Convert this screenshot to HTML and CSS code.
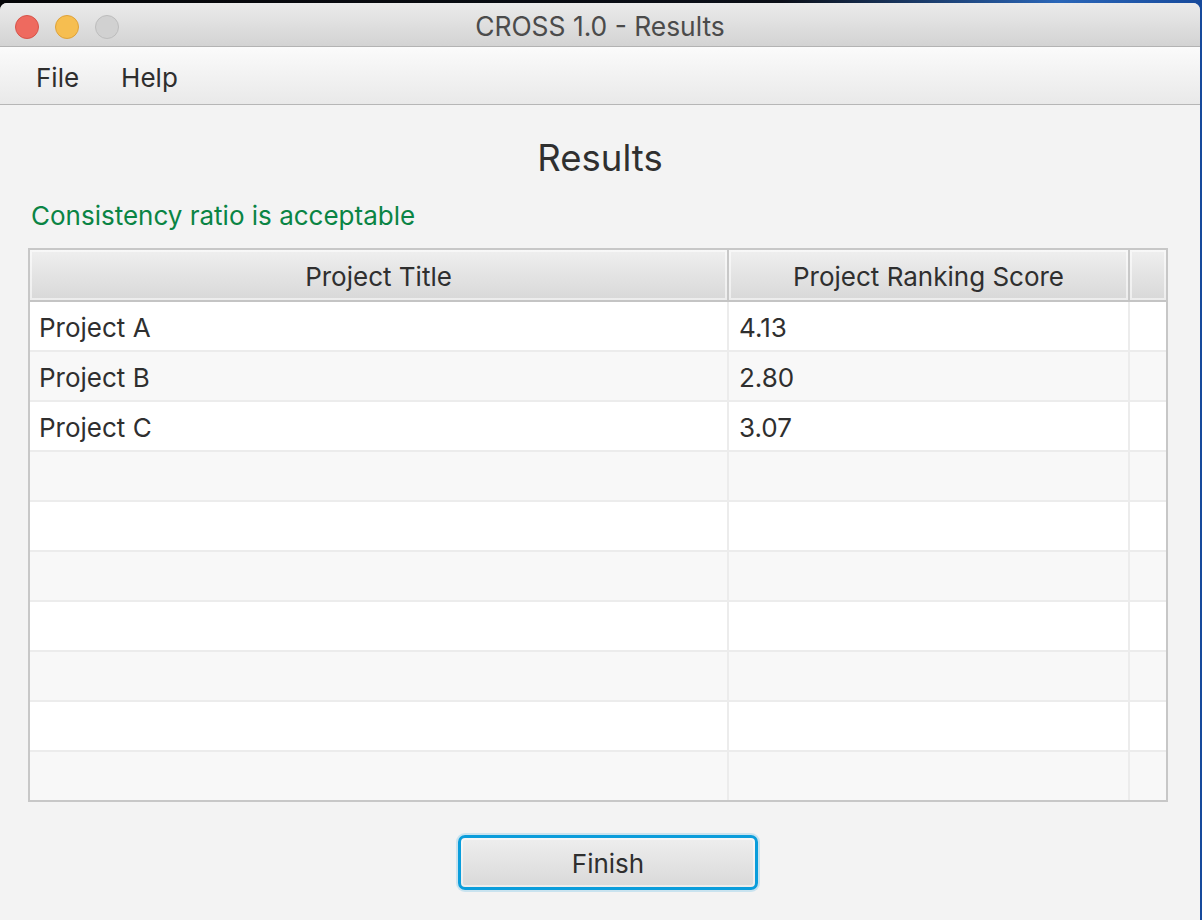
FILE: index.html
```html
<!DOCTYPE html>
<html lang="en">
<head>
<meta charset="utf-8">
<title>CROSS 1.0 - Results</title>
<link rel="stylesheet" href="styles.css">
</head>
<body>
<div class="window">
  <div class="titlebar">
    <div class="lights">
      <span class="light red"></span>
      <span class="light yellow"></span>
      <span class="light gray"></span>
    </div>
    <div class="title">CROSS 1.0 - Results</div>
  </div>
  <div class="menubar">
    <span class="menu-item">File</span>
    <span class="menu-item">Help</span>
  </div>
  <div class="content">
    <h1 class="heading">Results</h1>
    <p class="status">Consistency ratio is acceptable</p>
    <div class="table">
      <div class="row head">
        <div class="cell c1">Project Title</div>
        <div class="cell c2">Project Ranking Score</div>
        <div class="cell c3"></div>
      </div>
      <div class="row odd"><div class="cell c1">Project A</div><div class="cell c2">4.13</div><div class="cell c3"></div></div>
      <div class="row even"><div class="cell c1">Project B</div><div class="cell c2">2.80</div><div class="cell c3"></div></div>
      <div class="row odd"><div class="cell c1">Project C</div><div class="cell c2">3.07</div><div class="cell c3"></div></div>
      <div class="row even"><div class="cell c1"></div><div class="cell c2"></div><div class="cell c3"></div></div>
      <div class="row odd"><div class="cell c1"></div><div class="cell c2"></div><div class="cell c3"></div></div>
      <div class="row even"><div class="cell c1"></div><div class="cell c2"></div><div class="cell c3"></div></div>
      <div class="row odd"><div class="cell c1"></div><div class="cell c2"></div><div class="cell c3"></div></div>
      <div class="row even"><div class="cell c1"></div><div class="cell c2"></div><div class="cell c3"></div></div>
      <div class="row odd"><div class="cell c1"></div><div class="cell c2"></div><div class="cell c3"></div></div>
      <div class="row even"><div class="cell c1"></div><div class="cell c2"></div><div class="cell c3"></div></div>
    </div>
    <div class="actions">
      <button class="btn">Finish</button>
    </div>
  </div>
</div>
</body>
</html>
```

FILE: styles.css
```css
* { box-sizing: border-box; }
html, body { margin: 0; padding: 0; }
body {
  width: 1202px;
  height: 920px;
  overflow: hidden;
  background: linear-gradient(90deg, #050608 0%, #0b0f18 65%, #2a66b8 88%, #174a9c 100%);
  font-family: Inter, "Liberation Sans", sans-serif;
  color: #333;
}
.window {
  margin-top: 3px;
  width: 1200px;
  height: 917px;
  border-radius: 7px 7px 0 0;
  overflow: hidden;
  background: #f3f3f3;
  display: flex;
  flex-direction: column;
}
.titlebar {
  height: 44px;
  flex: none;
  background: linear-gradient(#ebebeb, #d3d3d3);
  border-bottom: 1px solid #b3b3b3;
  position: relative;
  display: flex;
  align-items: center;
  justify-content: center;
  padding-top: 3px;
}
.lights {
  position: absolute;
  left: 15px;
  top: 12px;
  display: flex;
  gap: 16px;
}
.light {
  width: 24px;
  height: 24px;
  border-radius: 50%;
  display: block;
}
.red { background: #ee6a5f; border: 1px solid #d6544a; }
.yellow { background: #f6be50; border: 1px solid #dea23a; }
.gray { background: #d1d1d1; border: 1px solid #bdbdbd; }
.title {
  font-size: 26.4px;
  color: #4b4b4b;
}
.menubar {
  height: 58px;
  flex: none;
  background: linear-gradient(#fbfbfb, #e9e9e9);
  border-bottom: 1px solid #b6b6b6;
  display: flex;
  align-items: center;
  padding-left: 15px;
  padding-top: 3px;
}
.menu-item {
  font-size: 26px;
  color: #2e2e2e;
  padding: 0 21px;
}
.content {
  flex: 1;
  padding: 31px 32px 0 28px;
  display: flex;
  flex-direction: column;
}
.heading {
  margin: 0;
  font-weight: 400;
  font-size: 36.5px;
  line-height: 44px;
  text-align: center;
  color: #2f2f2f;
  padding-left: 4px;
}
.status {
  margin: 20px 0 0 3px;
  font-size: 26px;
  line-height: 32px;
  color: #0a8444;
}
.table {
  margin-top: 16px;
  width: 1140px;
  border: 2px solid #c7c7c7;
  background: #fff;
}
.row {
  display: flex;
  height: 50px;
  border-top: 2px solid #ececec;
}
.row.head {
  height: 52px;
  border-top: none;
  border-bottom: 2px solid #c4c4c4;
}
.row.head + .row { border-top: none; height: 48px; }
.row.odd { background: #ffffff; }
.row.even { background: #f8f8f8; }
.cell {
  font-size: 26px;
  color: #2f2f2f;
  display: flex;
  align-items: center;
  border-right: 2px solid #ececec;
  padding-top: 2px;
}
.c1 { width: 699px; padding-left: 9px; }
.c2 { width: 401px; padding-left: 10px; }
.c3 { flex: 1; border-right: none; }
.head .cell {
  justify-content: center;
  padding-left: 0;
  background: linear-gradient(#efefef, #d8d8d8);
  box-shadow: inset 0 0 0 2px rgba(255, 255, 255, 0.55);
  border-right-color: #c8c8c8;
}
.head .c3 { border-right: none; }
.actions {
  display: flex;
  justify-content: center;
  padding-left: 20px;
  margin-top: 33px;
}
.btn {
  width: 300px;
  height: 55px;
  font-family: Inter, "Liberation Sans", sans-serif;
  font-size: 26px;
  color: #2f2f2f;
  border: 3px solid #0a9ddb;
  border-radius: 7px;
  background: linear-gradient(#eeeeee, #d9d9d9);
  box-shadow: 0 0 0 2px rgba(10, 157, 219, 0.18), inset 0 0 0 2px rgba(255, 255, 255, 0.5);
  padding: 2px 0 0;
}
```
